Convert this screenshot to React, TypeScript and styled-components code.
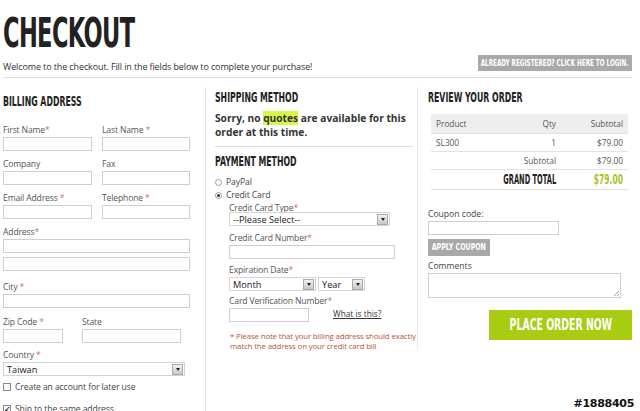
import React from "react";
import styled, { createGlobalStyle } from "styled-components";

const Global = createGlobalStyle`
  html, body { margin: 0; padding: 0; background: #fff; }
  body { font-family: "Open Sans", "Liberation Sans", sans-serif; color: #444; }
  * { box-sizing: border-box; }
`;

const cond = `"Liberation Sans Narrow", "DejaVu Sans Condensed", "Roboto", sans-serif`;

const Page = styled.div`
  position: relative;
  width: 640px;
  height: 411px;
  overflow: hidden;
  padding: 0 8px 0 3px;
`;

const Squeeze = styled.span<{ $x: number; $origin?: string }>`
  display: inline-block;
  white-space: nowrap;
  transform: scaleX(${(p) => p.$x});
  transform-origin: ${(p) => p.$origin ?? "left"} center;
`;

const Title = styled.h1`
  margin: 0;
  padding-top: 14px;
  font-family: ${cond};
  font-weight: 700;
  font-size: 41px;
  line-height: 38px;
  color: #222;
  letter-spacing: -1px;
`;

const IntroRow = styled.div`
  display: flex;
  justify-content: space-between;
  align-items: flex-end;
  margin-top: 3px;
  padding-bottom: 6px;
  border-bottom: 1px solid #ddd;
`;

const Intro = styled.p`
  margin: 0 0 -2px;
  font-size: 9px;
  line-height: 12px;
  letter-spacing: -0.12px;
  color: #333;
`;

const GrayButton = styled.button<{ $w: number; $h: number }>`
  border: none;
  background: #a9a9a9;
  color: #fff;
  font-family: ${cond};
  font-weight: 700;
  font-size: 9px;
  width: ${(p) => p.$w}px;
  height: ${(p) => p.$h}px;
  padding: 0;
  display: flex;
  align-items: center;
  justify-content: center;
  cursor: pointer;
`;

const Columns = styled.div`
  display: grid;
  grid-template-columns: 203px 212px 1fr;
  margin-top: 9px;
`;

const Col = styled.section<{ $divider?: boolean; $pad?: number; $h?: number }>`
  padding-left: ${(p) => p.$pad ?? 0}px;
  border-right: ${(p) => (p.$divider ? "1px solid #e6e6e6" : "none")};
  height: ${(p) => (p.$h ? `${p.$h}px` : "auto")};
`;

const Heading = styled.h2<{ $top?: number }>`
  margin: ${(p) => p.$top ?? 4}px 0 0;
  font-family: ${cond};
  font-weight: 700;
  font-size: 14px;
  line-height: 16px;
  color: #222;
`;

const FieldRow = styled.div<{ $cols?: string }>`
  display: grid;
  grid-template-columns: ${(p) => p.$cols ?? "99px 99px"};
`;

const Field = styled.div<{ $mb?: number }>`
  display: flex;
  flex-direction: column;
  margin-bottom: ${(p) => p.$mb ?? 7}px;
`;

const Label = styled.label<{ $mb?: number }>`
  font-size: 8.6px;
  line-height: 12px;
  letter-spacing: -0.15px;
  color: #555;
  margin-bottom: ${(p) => p.$mb ?? 1}px;
  white-space: nowrap;
`;

const Star = styled.span`
  color: #d26a8e;
`;

const Input = styled.div<{ $w: number; $h?: number }>`
  width: ${(p) => p.$w}px;
  height: ${(p) => p.$h ?? 14}px;
  border: 1px solid #cfcfcf;
  background: #fff;
  position: relative;
`;

const Resize = styled.span`
  position: absolute;
  right: 1px;
  bottom: 1px;
  width: 5px;
  height: 5px;
  background: linear-gradient(135deg, transparent 45%, #999 46%, #999 55%, transparent 56%, transparent 70%, #999 71%, #999 80%, transparent 81%);
`;

const SelectBox = styled.div<{ $w: number }>`
  width: ${(p) => p.$w}px;
  height: 14px;
  border: 1px solid #d4d4d4;
  background: #fff;
  display: flex;
  align-items: center;
  justify-content: space-between;
  font-size: 9.2px;
  color: #222;
  padding-left: 3px;
`;

const Arrow = styled.span`
  width: 11px;
  height: 11px;
  margin-right: 1px;
  background: linear-gradient(#f0f0f0, #c9c9c9);
  border: 1px solid #aaa;
  display: flex;
  align-items: center;
  justify-content: center;
  &::after {
    content: "";
    border-left: 2.5px solid transparent;
    border-right: 2.5px solid transparent;
    border-top: 3px solid #222;
  }
`;

const Select = ({ w, children }: { w: number; children: React.ReactNode }) => (
  <SelectBox $w={w}>
    <span>{children}</span>
    <Arrow />
  </SelectBox>
);

const CheckLine = styled.div<{ $mt?: number }>`
  display: flex;
  align-items: center;
  gap: 4px;
  margin-top: ${(p) => p.$mt ?? 0}px;
  font-size: 8.6px;
  line-height: 12px;
  letter-spacing: -0.1px;
  color: #444;
`;

const Box = styled.span`
  width: 8px;
  height: 8px;
  border: 1px solid #888;
  background: #fff;
  font-size: 8px;
  line-height: 6px;
  text-align: center;
  color: #111;
  font-weight: 700;
`;

const Radio = styled.span<{ $on?: boolean }>`
  width: 7px;
  height: 7px;
  border-radius: 50%;
  border: 1px solid #999;
  background: #fff;
  display: flex;
  align-items: center;
  justify-content: center;
  &::after {
    content: "";
    width: 3px;
    height: 3px;
    border-radius: 50%;
    background: ${(p) => (p.$on ? "#333" : "transparent")};
  }
`;

const Sorry = styled.p`
  margin: 6px 0 0;
  font-size: 10.2px;
  line-height: 14px;
  font-weight: 700;
  color: #333;
  padding-bottom: 7px;
  border-bottom: 1px solid #e0e0e0;
  width: 198px;
`;

const Mark = styled.span`
  background: #d6f64a;
`;

const Nested = styled.div`
  padding-left: 14px;
`;

const Inline = styled.div<{ $gap?: number; $align?: string }>`
  display: flex;
  align-items: ${(p) => p.$align ?? "center"};
  gap: ${(p) => p.$gap ?? 2}px;
`;

const Link = styled.a`
  font-size: 8.3px;
  line-height: 12px;
  color: #333;
  text-decoration: underline;
  margin-left: 24px;
`;

const Note = styled.p`
  margin: 9px 0 0 1px;
  width: 190px;
  font-size: 7.8px;
  line-height: 10px;
  letter-spacing: -0.12px;
  color: #b5563a;
`;

const Table = styled.table`
  margin: 9px 0 0 3px;
  width: 197px;
  table-layout: fixed;
  border-collapse: collapse;
  font-size: 8.3px;
  color: #555;
`;

const Th = styled.th<{ $align?: string; $w: number }>`
  background: #eee;
  font-weight: 400;
  width: ${(p) => p.$w}px;
  text-align: ${(p) => p.$align ?? "left"};
  height: 19px;
  padding: 0 5px;
  border-bottom: 1px solid #e2e2e2;
  white-space: nowrap;
`;

const Td = styled.td<{ $align?: string; $h?: number }>`
  text-align: ${(p) => p.$align ?? "left"};
  height: ${(p) => p.$h ?? 18}px;
  padding: 0 5px;
  border-bottom: 1px solid #e2e2e2;
  white-space: nowrap;
`;

const Grand = styled.span<{ $green?: boolean }>`
  font-family: ${cond};
  font-weight: 700;
  font-size: 13.5px;
  color: ${(p) => (p.$green ? "#9fc72a" : "#222")};
`;

const RightStack = styled.div`
  margin-top: 18px;
  display: flex;
  flex-direction: column;
  align-items: flex-start;
`;

const SmallLabel = styled.div<{ $mt?: number }>`
  font-size: 8.6px;
  line-height: 12px;
  color: #444;
  margin-top: ${(p) => p.$mt ?? 0}px;
  margin-bottom: 1px;
`;

const PlaceOrder = styled.button`
  align-self: flex-end;
  margin-top: 12px;
  width: 143px;
  height: 30px;
  border: none;
  padding: 0;
  background: #a8cc12;
  color: #fff;
  font-family: ${cond};
  font-weight: 700;
  font-size: 16px;
  display: flex;
  align-items: center;
  justify-content: center;
  cursor: pointer;
`;

const Watermark = styled.div`
  position: absolute;
  right: 6px;
  bottom: 1px;
  font-family: "DejaVu Sans", sans-serif;
  font-weight: 700;
  font-size: 11px;
  color: #111;
  text-shadow: 1px 0 #fff, -1px 0 #fff, 0 1px #fff, 0 -1px #fff;
  letter-spacing: -0.3px;
`;

const Req = ({ children, sp = true, mb }: { children: React.ReactNode; sp?: boolean; mb?: number }) => (
  <Label $mb={mb}>
    {children}
    {sp ? " " : ""}
    <Star>*</Star>
  </Label>
);

export default function App() {
  return (
    <Page>
      <Global />
      <Title>
        <Squeeze $x={0.61}>CHECKOUT</Squeeze>
      </Title>
      <IntroRow>
        <Intro>Welcome to the checkout. Fill in the fields below to complete your purchase!</Intro>
        <GrayButton $w={154} $h={16}>
          <Squeeze $x={0.7} $origin="center">ALREADY REGISTERED? CLICK HERE TO LOGIN.</Squeeze>
        </GrayButton>
      </IntroRow>
      <Columns>
        <Col $divider $h={340}>
          <Heading $top={6}>
            <Squeeze $x={0.62}>BILLING ADDRESS</Squeeze>
          </Heading>
          <div style={{ height: 15 }} />
          <FieldRow>
            <Field>
              <Req sp={false}>First Name</Req>
              <Input $w={89} />
            </Field>
            <Field>
              <Req>Last Name</Req>
              <Input $w={88} />
            </Field>
          </FieldRow>
          <FieldRow>
            <Field>
              <Label>Company</Label>
              <Input $w={89} />
            </Field>
            <Field>
              <Label>Fax</Label>
              <Input $w={88} />
            </Field>
          </FieldRow>
          <FieldRow>
            <Field>
              <Req>Email Address</Req>
              <Input $w={89} />
            </Field>
            <Field>
              <Req>Telephone</Req>
              <Input $w={88} />
            </Field>
          </FieldRow>
          <Field $mb={10}>
            <Req sp={false}>Address</Req>
            <Input $w={187} />
            <div style={{ height: 4 }} />
            <Input $w={187} />
          </Field>
          <Field $mb={8}>
            <Req>City</Req>
            <Input $w={187} />
          </Field>
          <FieldRow $cols="79px 100px">
            <Field $mb={6}>
              <Req>Zip Code</Req>
              <Input $w={60} />
            </Field>
            <Field $mb={6}>
              <Label>State</Label>
              <Input $w={99} />
            </Field>
          </FieldRow>
          <Field $mb={5}>
            <Req>Country</Req>
            <Select w={182}>Taiwan</Select>
          </Field>
          <CheckLine>
            <Box />
            Create an account for later use
          </CheckLine>
          <CheckLine $mt={10}>
            <Box>✓</Box>
            Ship to the same address
          </CheckLine>
        </Col>
        <Col $divider $pad={9} $h={262}>
          <Heading $top={2}>
            <Squeeze $x={0.62}>SHIPPING METHOD</Squeeze>
          </Heading>
          <Sorry>
            Sorry, no <Mark>quotes</Mark> are available for this order at this time.
          </Sorry>
          <Heading $top={6}>
            <Squeeze $x={0.62}>PAYMENT METHOD</Squeeze>
          </Heading>
          <div style={{ height: 7 }} />
          <CheckLine>
            <Radio />
            PayPal
          </CheckLine>
          <CheckLine $mt={1}>
            <Radio $on />
            Credit Card
          </CheckLine>
          <Nested>
            <Field $mb={6}>
              <Label $mb={-2} style={{ marginTop: 1 }}>
                Credit Card Type<Star>*</Star>
              </Label>
              <Select w={161}>--Please Select--</Select>
            </Field>
            <Field $mb={5}>
              <Label>
                Credit Card Number<Star>*</Star>
              </Label>
              <Input $w={166} />
            </Field>
            <Field $mb={4}>
              <Label>
                Expiration Date<Star>*</Star>
              </Label>
              <Inline>
                <Select w={87}>Month</Select>
                <Select w={47}>Year</Select>
              </Inline>
            </Field>
            <Field $mb={0}>
              <Label>
                Card Verification Number<Star>*</Star>
              </Label>
              <Inline $gap={0} $align="flex-start">
                <Input $w={80} />
                <Link>What is this?</Link>
              </Inline>
            </Field>
            <Note>
              * Please note that your billing address should exactly match the address on your credit card bill
            </Note>
          </Nested>
        </Col>
        <Col $pad={10}>
          <Heading $top={2}>
            <Squeeze $x={0.62}>REVIEW YOUR ORDER</Squeeze>
          </Heading>
          <Table>
            <thead>
              <tr>
                <Th $w={90}>Product</Th>
                <Th $w={40} $align="right">Qty</Th>
                <Th $w={67} $align="right">Subtotal</Th>
              </tr>
            </thead>
            <tbody>
              <tr>
                <Td>SL300</Td>
                <Td $align="right">1</Td>
                <Td $align="right">$79.00</Td>
              </tr>
              <tr>
                <Td colSpan={2} $align="right">Subtotal</Td>
                <Td $align="right">$79.00</Td>
              </tr>
              <tr>
                <Td colSpan={2} $align="right" $h={20}>
                  <Grand>
                    <Squeeze $x={0.55} $origin="right">GRAND TOTAL</Squeeze>
                  </Grand>
                </Td>
                <Td $align="right" $h={20}>
                  <Grand $green>
                    <Squeeze $x={0.62} $origin="right">$79.00</Squeeze>
                  </Grand>
                </Td>
              </tr>
            </tbody>
          </Table>
          <RightStack>
            <SmallLabel>Coupon code:</SmallLabel>
            <Input $w={131} />
            <GrayButton $w={62} $h={17} style={{ marginTop: 4 }}>
              <Squeeze $x={0.78} $origin="center">APPLY COUPON</Squeeze>
            </GrayButton>
            <SmallLabel $mt={4}>Comments</SmallLabel>
            <Input $w={193} $h={25}>
              <Resize />
            </Input>
            <PlaceOrder>
              <Squeeze $x={0.65} $origin="center">PLACE ORDER NOW</Squeeze>
            </PlaceOrder>
          </RightStack>
        </Col>
      </Columns>
      <Watermark>#1888405</Watermark>
    </Page>
  );
}
